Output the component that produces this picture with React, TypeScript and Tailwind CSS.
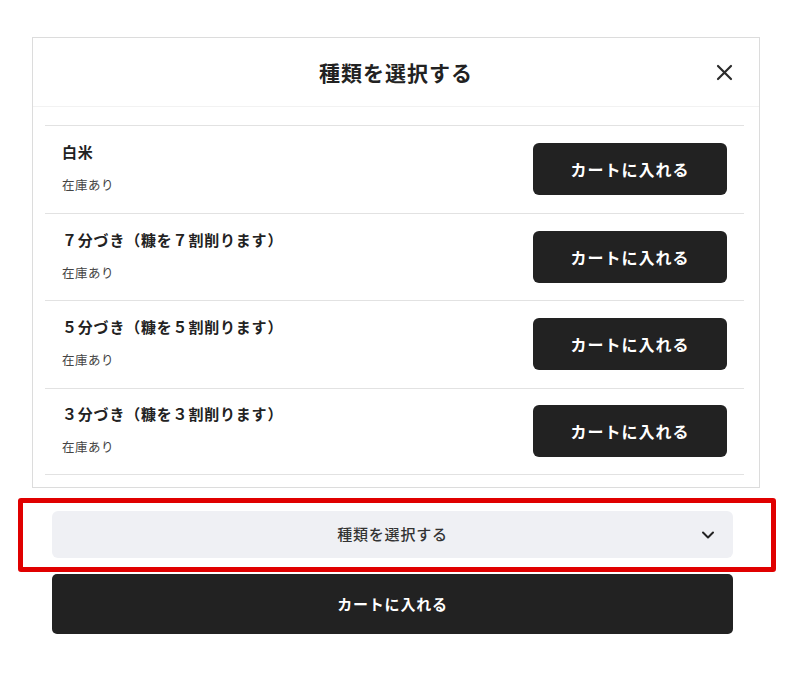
import React from "react";

const items = [
  "白米",
  "７分づき（糠を７割削ります）",
  "５分づき（糠を５割削ります）",
  "３分づき（糠を３割削ります）",
];

export default function App() {
  return (
    <div
      className="w-[800px] h-[679px] bg-white text-[#222]"
      style={{ fontFamily: '"Noto Sans CJK JP", "Noto Sans", sans-serif' }}
    >
      <div className="pt-[37px] pl-[32px] w-[760px]">
        <div className="border border-[#dcdcdc] bg-white">
          <div className="relative h-[69px] flex items-center justify-center border-b border-[#f2f2f2]">
            <span className="text-[21px] font-bold leading-none tracking-[1px]">種類を選択する</span>
            <svg
              className="absolute right-[26px] top-[26px]"
              width="17"
              height="17"
              viewBox="0 0 17 17"
              fill="none"
              stroke="#2b2b2b"
              strokeWidth="2.2"
              strokeLinecap="round"
            >
              <path d="M2 2 L15 15 M15 2 L2 15" />
            </svg>
          </div>
          <div className="pt-[18px] pb-[12px] pl-[12px] pr-[15px]">
            {items.map((name, i) => (
              <div
                key={i}
                className={`flex items-center justify-between border-t border-[#e2e2e2] px-[17px] h-[87.5px] ${
                  i === items.length - 1 ? "border-b" : ""
                }`}
              >
                <div className="flex flex-col -mt-[1px]">
                  <div className="text-[15px] font-bold leading-[20px] tracking-[0.8px]">{name}</div>
                  <div className="mt-[13px] text-[12.5px] leading-[20px] text-[#444] tracking-[0.5px]">在庫あり</div>
                </div>
                <button className="w-[194px] h-[52px] rounded-[6px] bg-[#222] text-white text-[16px] font-bold tracking-[1px]">
                  カートに入れる
                </button>
              </div>
            ))}
          </div>
        </div>
      </div>
      <div className="ml-[18px] mt-[10px] w-[758px] border-[5px] border-[#e00000] rounded-[3px] pl-[29px] pr-[38px] pt-[8px] pb-[9px]">
        <div className="relative h-[47px] rounded-[6px] bg-[#eff0f4] flex items-center justify-center">
          <span className="text-[15px] font-medium text-[#333] tracking-[0.8px]">種類を選択する</span>
          <svg
            className="absolute right-[18px] top-[19px]"
            width="14"
            height="10"
            viewBox="0 0 14 10"
            fill="none"
            stroke="#222"
            strokeWidth="2"
            strokeLinecap="round"
            strokeLinejoin="round"
          >
            <path d="M2 2.5 L7 7.5 L12 2.5" />
          </svg>
        </div>
      </div>
      <div className="ml-[52px] mt-[2px] w-[681px] h-[60px] rounded-[5px] bg-[#222] flex items-center justify-center">
        <span className="text-[15px] font-bold text-white tracking-[0.8px]">カートに入れる</span>
      </div>
    </div>
  );
}
